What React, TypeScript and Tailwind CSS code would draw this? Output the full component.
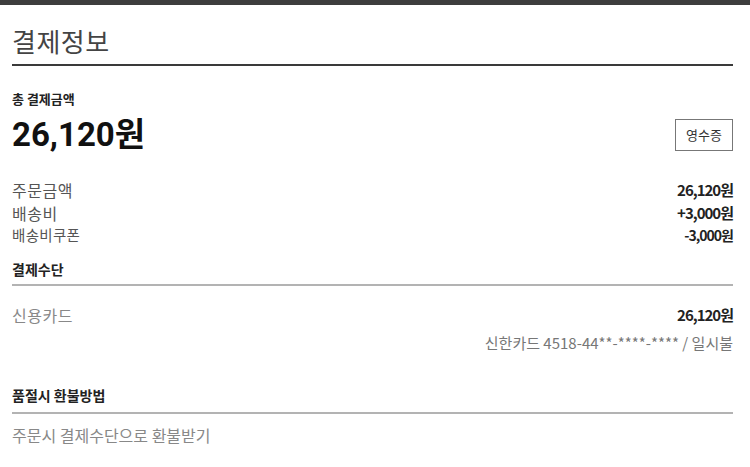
import React from "react";

const kr = { fontFamily: '"Noto Sans CJK KR", "Noto Sans", sans-serif' };
const num = { fontFamily: 'Roboto, "Noto Sans CJK KR", sans-serif' };

export default function App() {
  return (
    <div className="w-[750px] h-[467px] bg-white overflow-hidden" style={kr}>
      <div className="h-[5px] bg-[#3d3d3d]" />
      <div className="pl-[12px] pr-[17px]">
        <h1 className="pt-[19px] pb-[6px] text-[26px] leading-[34px] font-normal text-[#444] tracking-[0.5px] border-b-2 border-[#3a3a3a]">
          결제정보
        </h1>

        <div className="mt-[23px] text-[13px] leading-[20px] font-bold text-[#222]">총 결제금액</div>
        <div className="flex items-center justify-between h-[40px] mt-[6px]">
          <div className="text-[33px] leading-[40px] font-bold text-[#111]" style={num}>
            26,120원
          </div>
          <button className="w-[58px] h-[32px] border border-[#777] bg-white text-[13px] text-[#333] flex items-center justify-center">
            영수증
          </button>
        </div>

        <div className="mt-[25px] flex items-center justify-between h-[20px] leading-[20px]">
          <span className="text-[16px] text-[#555] tracking-[0.5px]">주문금액</span>
          <span className="text-[15px] font-bold text-[#222] tracking-[-1px]">26,120원</span>
        </div>
        <div className="mt-[3px] flex items-center justify-between h-[20px] leading-[20px]">
          <span className="text-[16px] text-[#555] tracking-[0.5px]">배송비</span>
          <span className="text-[15px] font-bold text-[#222] tracking-[-1px]">+3,000원</span>
        </div>
        <div className="mt-[2px] flex items-center justify-between h-[20px] leading-[20px]">
          <span className="text-[14.5px] text-[#555] tracking-[0.3px]">배송비쿠폰</span>
          <span className="text-[14px] font-bold text-[#222] tracking-[-1px]">-3,000원</span>
        </div>

        <div className="mt-[14px] pb-[5px] border-b-2 border-[#b3b3b3] text-[14px] leading-[20px] font-bold text-[#222]">
          결제수단
        </div>

        <div className="mt-[18px] flex items-center justify-between h-[22px] leading-[22px]">
          <span className="text-[16px] text-[#888] tracking-[0.5px]">신용카드</span>
          <span className="text-[15px] font-bold text-[#222] tracking-[-1px]">26,120원</span>
        </div>
        <div className="mt-[7px] flex justify-end h-[20px] leading-[20px] items-center text-[15px] text-[#777]">
          신한카드 4518-44**-****-**** / 일시불
        </div>

        <div className="mt-[32px] pb-[7px] border-b-2 border-[#b3b3b3] text-[14px] leading-[20px] font-bold text-[#222]">
          품절시 환불방법
        </div>
        <div className="mt-[11px] text-[16px] leading-[20px] text-[#888]">주문시 결제수단으로 환불받기</div>
      </div>
    </div>
  );
}
